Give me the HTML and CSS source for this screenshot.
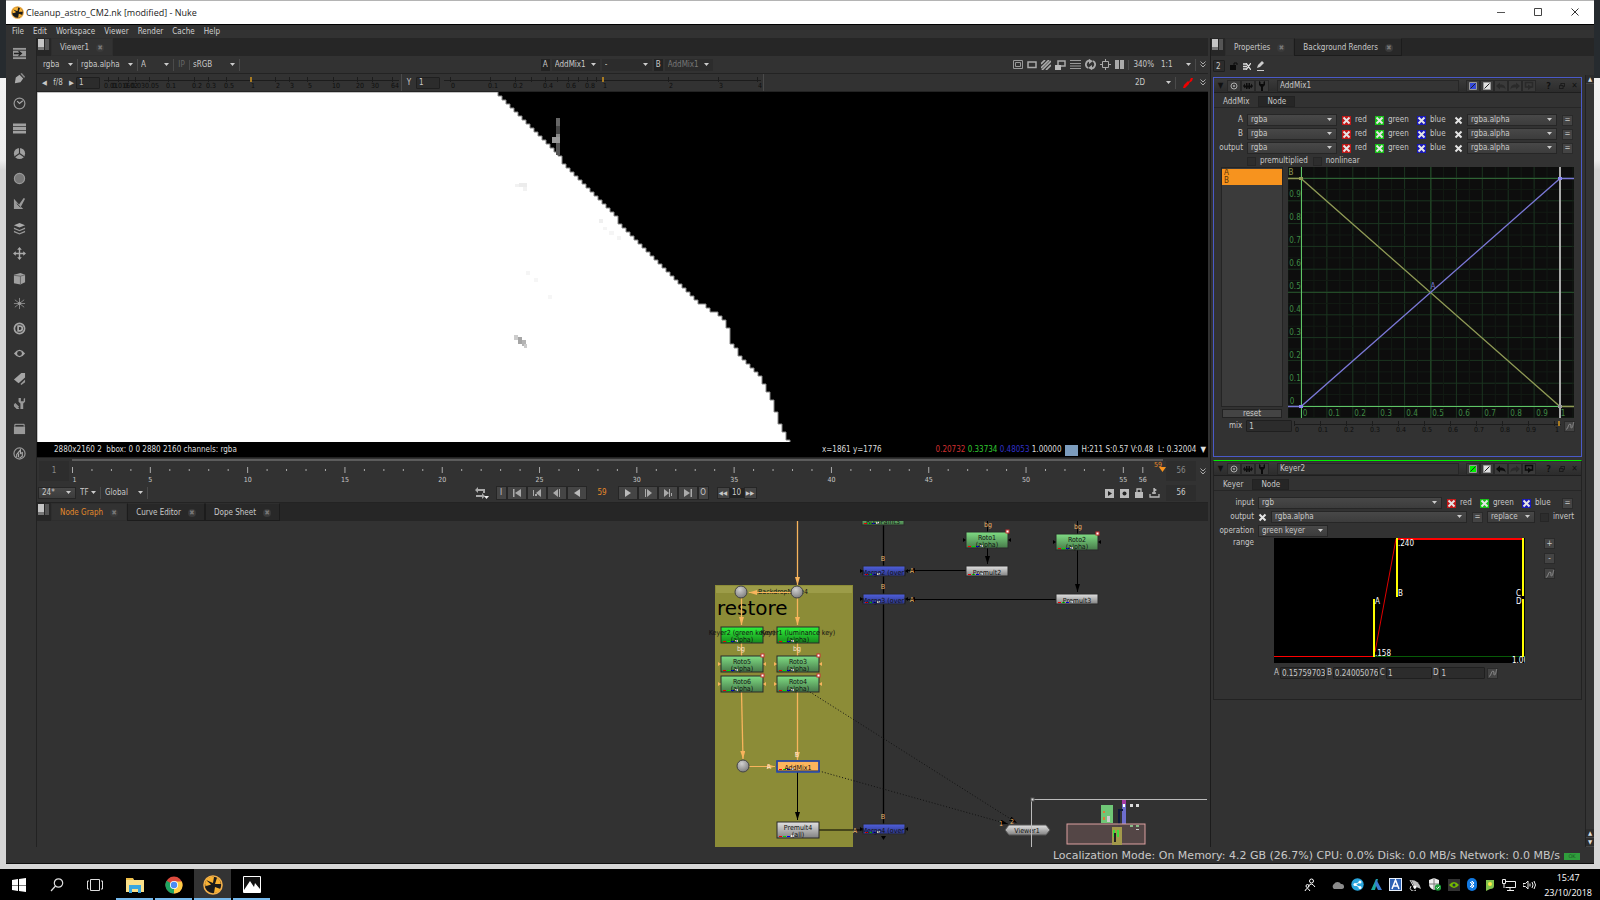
FILE: index.html
```html
<!DOCTYPE html>
<html lang="en">
<head>
    <meta charset="UTF-8">
    <meta name="viewport" content="width=device-width, initial-scale=1.0">
    <title>Cleanup_astro_CM2.nk [modified] - Nuke</title>
    <link rel="stylesheet" href="styles.css">
</head>
<body>
    <svg class="defs" width="0" height="0">
        <defs>
            <linearGradient id="gGreen" x2="0" y2="1"><stop offset="0" stop-color="#7fdd84"/><stop offset="1" stop-color="#477b4a"/></linearGradient>
            <linearGradient id="gKey" x2="0" y2="1"><stop offset="0" stop-color="#2df23a"/><stop offset="1" stop-color="#178a1d"/></linearGradient>
            <linearGradient id="gBlue" x2="0" y2="1"><stop offset="0" stop-color="#4f60de"/><stop offset="1" stop-color="#2c3687"/></linearGradient>
            <linearGradient id="gGrey" x2="0" y2="1"><stop offset="0" stop-color="#e2e2e2"/><stop offset="1" stop-color="#828282"/></linearGradient>
            <radialGradient id="gDot" cx=".4" cy=".3" r=".8"><stop offset="0" stop-color="#d0d0d0"/><stop offset="1" stop-color="#747474"/></radialGradient>
            <marker id="arrowO" markerUnits="userSpaceOnUse" viewBox="0 0 8 5" markerWidth="8" markerHeight="5" refX="8" refY="2.5" orient="auto"><path d="M0 0L8 2.5L0 5z" fill="#f8b45c"/></marker>
            <marker id="arrowK" markerUnits="userSpaceOnUse" viewBox="0 0 8 5" markerWidth="8" markerHeight="5" refX="8" refY="2.5" orient="auto"><path d="M0 0L8 2.5L0 5z" fill="#000"/></marker>
        </defs>
        <symbol id="nuke" viewBox="0 0 20 20"><circle cx="10" cy="10" r="9" fill="#1b1b1b" stroke="#f3b04b" stroke-width="1.6"/><path d="M10 8L3 5A8 8 0 0 1 11 2zM12 9L14 2.800A8 8 0 0 1 17.800 9zM12 12l5.500 2A8 8 0 0 1 11 18zM8 9.500L2.500 12A8 8 0 0 1 3 5z" fill="#f9b233"/><path d="M9 10L4 15a8 8 0 0 1-1.800-4z" fill="#1b1b1b"/><circle cx="10.500" cy="9.500" r="1.700" fill="#1b1b1b"/></symbol>
        <symbol id="pane" viewBox="0 0 11 11"><path d="M0 0h6v8H0z" fill="#c4c4c4"/><path d="M0 8h6v3H0z" fill="#777"/><path d="M7 0h4v11H7z" fill="#555"/></symbol>
        <symbol id="chev" viewBox="0 0 6 7"><path d="M.5 .5L3 3L5.500 .5M.5 3.500L3 6L5.500 3.500" fill="none" stroke="#aaa"/></symbol>
        <symbol id="curve" viewBox="0 0 10 10"><path d="M1 8C3 9 3 3 5 3S5 7 6.500 7S8 2 9 1" fill="none" stroke="#8d8d8d"/></symbol>
        <symbol id="target" viewBox="0 0 10 10"><circle cx="5" cy="5" r="3" fill="none" stroke="#aaa"/><circle cx="5" cy="5" r="1" fill="#aaa"/></symbol>
        <symbol id="wings" viewBox="0 0 10 10"><path d="M0 5l2-2.500v2h1V2h1.500v2.500h1V2H7v2.500h1v-2L10 5 8 7.500v-1H7V8H5.500V6.500h-1V8H3V6.500H2v1z" fill="#0c0c0c"/></symbol>
        <symbol id="wrench" viewBox="0 0 10 10"><path d="M2 0v4l2 2v4h2V6l2-2V0L6.500 1v2h-3V1z" fill="#0a0a0a"/></symbol>
        <symbol id="swatch" viewBox="0 0 8 8"><path d="M.5 .5h7v7h-7z" fill="currentColor" stroke="#999"/><path d="M1.500 6.500L6.500 1.500" stroke="#222"/></symbol>
        <symbol id="undo" viewBox="0 0 10 8"><path d="M0 4l4-3.500v2c4 0 5.500 1.500 5.500 5C8.500 5.500 7 5.500 4 5.500v2z" fill="currentColor"/></symbol>
        <symbol id="revert" viewBox="0 0 10 9"><path d="M4 6H1.500V1.500h7V6H7" fill="none" stroke="currentColor" stroke-width="1.500"/><path d="M4 3.500L8 6 4 9z" fill="currentColor"/></symbol>
        <symbol id="float" viewBox="0 0 8 8"><path d="M2.500 3V.5h5v4H6M.5 3.500h5v4h-5z" fill="none" stroke="#111"/></symbol>
    </svg>

    <div class="desktop">
        <div class="window">
            <header class="titlebar">
                <svg width="13" height="13"><use href="#nuke"/></svg>
                <h1>Cleanup_astro_CM2.nk [modified] - Nuke</h1>
                <div class="win-buttons">
                    <button aria-label="Minimize"><svg width="9" height="9"><path d="M0 4.500h8" stroke="#555"/></svg></button>
                    <button aria-label="Maximize"><svg width="9" height="9"><path d="M.5 .5h7v7h-7z" fill="none" stroke="#444"/></svg></button>
                    <button aria-label="Close"><svg width="9" height="9"><path d="M.5 .5l7 7M7.500 .5l-7 7" stroke="#333"/></svg></button>
                </div>
            </header>
            <nav class="menubar">
                <a href="#">File</a><a href="#">Edit</a><a href="#">Workspace</a><a href="#">Viewer</a><a href="#">Render</a><a href="#">Cache</a><a href="#">Help</a>
            </nav>

            <div class="workspace">
                <aside class="toolbar">
                    <button aria-label="Image"><svg viewBox="0 0 14 14"><path d="M0 1h14v12H0z" fill="#999"/><path d="M0 3.500h14M0 10.500h14" stroke="#333"/><path d="M1 7h7M6 4.500L9 7L6 9.500" fill="none" stroke="#222" stroke-width="1.500"/></svg></button>
                    <button aria-label="Draw"><svg viewBox="0 0 14 14"><path d="M2 12l1-6 4-3 4 4-3 4z" fill="#aaa"/><path d="M8 2l1.500-1 3.500 4-1 1.500z" fill="#888"/></svg></button>
                    <button aria-label="Time"><svg viewBox="0 0 14 14"><circle cx="7" cy="7" r="5.800" fill="none" stroke="#999" stroke-width="1.300"/><path d="M4.500 4.500L7 7L10.500 4" fill="none" stroke="#aaa" stroke-width="1.300"/></svg></button>
                    <button aria-label="Channel"><svg viewBox="0 0 14 14"><path d="M0 1.500h14v3H0zM0 5.500h14v3H0zM0 9.500h14v3H0z" fill="#a0a0a0"/></svg></button>
                    <button aria-label="Color"><svg viewBox="0 0 14 14"><circle cx="7" cy="7" r="6" fill="#a0a0a0"/><path d="M7 1v6L2 10.500M7 7l5 3.500" fill="none" stroke="#333" stroke-width="1.200"/></svg></button>
                    <button aria-label="Filter"><svg viewBox="0 0 14 14"><circle cx="7" cy="7" r="5.500" fill="#777" stroke="#999" stroke-width="1.200"/></svg></button>
                    <button aria-label="Keyer"><svg viewBox="0 0 14 14"><path d="M1 2v11h10L8.500 10.500L13 2L11.500 1L6.500 8z" fill="#9a9a9a"/><path d="M4 7l4 4" stroke="#333"/></svg></button>
                    <button aria-label="Merge"><svg viewBox="0 0 14 14"><path d="M7 1l6 2.500-6 2.500-6-2.500z" fill="#aaa"/><path d="M1 6l6 2.500L13 6v1.500L7 10L1 7.500zM1 9.500L7 12l6-2.500V11l-6 2.500L1 11z" fill="#999"/></svg></button>
                    <button aria-label="Transform"><svg viewBox="0 0 14 14"><path d="M7 2v10M2 7h10" stroke="#aaa" stroke-width="1.500"/><path d="M7 0l2.500 3h-5zM7 14l2.500-3h-5zM0 7l3-2.500v5zM14 7l-3-2.500v5z" fill="#aaa"/></svg></button>
                    <button aria-label="3D"><svg viewBox="0 0 14 14"><path d="M1 3l7-2 5 2v8l-5 2.500L1 12z" fill="#a0a0a0"/><path d="M1 3.500l7 1 5-1.500M8 4.500v9" fill="none" stroke="#555" stroke-width=".8"/></svg></button>
                    <button aria-label="Particles"><svg viewBox="0 0 14 14"><path d="M7 1v12M2 3l10 8M12 3L2 11M1 7h12" stroke="#888"/><circle cx="7" cy="7" r="1.800" fill="#999"/></svg></button>
                    <button aria-label="Deep"><svg viewBox="0 0 14 14"><circle cx="7" cy="7" r="5.500" fill="#333" stroke="#a5a5a5" stroke-width="1.800"/><path d="M5.500 4.500h2a2.500 2.500 0 0 1 0 5h-2z" fill="none" stroke="#aaa" stroke-width="1.800"/></svg></button>
                    <button aria-label="Views"><svg viewBox="0 0 14 14"><path d="M1 7q6-8 12 0q-6 8-12 0z" fill="#a5a5a5"/><circle cx="7" cy="7" r="2.600" fill="#333"/></svg></button>
                    <button aria-label="MetaData"><svg viewBox="0 0 14 14"><path d="M1 8l8-7h4v5l-7 6z" fill="#a5a5a5"/><path d="M8 13l5-5v3l-4 3z" fill="#999"/></svg></button>
                    <button aria-label="ToolSets"><svg viewBox="0 0 14 14"><path d="M6 1v4l2 2v6h3V7l2-2V1l-1.500 1v2.500h-3V1zM1 7v3l3 3h3l-4-4z" fill="#999"/><path d="M2 7l4 4" stroke="#999" stroke-width="1.500"/></svg></button>
                    <button aria-label="Other"><svg viewBox="0 0 14 14"><path d="M1 5h12v8H1z" fill="#999"/><path d="M2 5V2.500h10V5" fill="none" stroke="#aaa"/></svg></button>
                    <button aria-label="Furnace"><svg viewBox="0 0 14 14"><circle cx="7" cy="7" r="6" fill="none" stroke="#999" stroke-width="1.300"/><path d="M4 11V8l4-5v4l2-1v4l-3 2M6 7v4" fill="none" stroke="#aaa" stroke-width="1.200"/></svg></button>
                </aside>

                <main class="center">
                    <div class="tabs">
                        <svg class="pane" width="11" height="11"><use href="#pane"/></svg>
                        <div class="tab active">Viewer1 <button class="x" aria-label="Close tab">✖</button></div>
                    </div>
                    <div class="bar">
                        <select class="flat w38" aria-label="Channels"><option>rgba</option></select>
                        <select class="flat w60" aria-label="Alpha channel"><option>rgba.alpha</option></select>
                        <select class="flat w36" aria-label="Display channel"><option>A</option></select>
                        <button class="ip">IP</button>
                        <select class="flat w50" aria-label="Viewer process"><option>sRGB</option></select>
                        <div class="inputs">
                            <label for="inA">A</label><select id="inA" class="dark w48"><option>AddMix1</option></select>
                            <select class="dark w50" aria-label="Wipe"><option>-</option></select>
                            <label for="inB">B</label><select id="inB" class="dark w48 dim"><option>AddMix1</option></select>
                        </div>
                        <div class="view-icons">
                            <svg width="10" height="9"><path d="M.5 .5h9v8h-9zM2.500 2.500h5v4h-5z" fill="none" stroke="#999"/></svg>
                            <svg width="10" height="9"><path d="M1 2h8v5.500H1z" fill="none" stroke="#aaa" stroke-width="1.500"/></svg>
                            <svg width="10" height="10"><path d="M0 4l4-4M0 8l8-8M1 10l9-9M5 10l5-5" stroke="#aaa" stroke-width="1.700"/></svg>
                            <svg width="11" height="10"><path d="M3 1h7v5H3z" fill="none" stroke="#aaa" stroke-width="1.500"/><path d="M0 5h6v5H0z" fill="#bbb"/></svg>
                            <svg width="11" height="9"><path d="M0 .5h11M0 3.500h11M0 6h11M0 8.500h11" stroke="#999"/></svg>
                            <svg width="11" height="11"><path d="M5 1.500A4 4 0 0 0 3 9M6 9.500A4 4 0 0 0 8 2" fill="none" stroke="#aaa" stroke-width="1.800"/><path d="M4 0l4 2-4 3zM7 6L3 9l4 2z" fill="#aaa"/></svg>
                            <svg width="11" height="11"><path d="M2.500 2.500h6v6h-6zM5.500 0v3M5.500 8v3M0 5.500h3M8 5.500h3" fill="none" stroke="#aaa"/></svg>
                            <svg width="9" height="9"><path d="M0 0h4v9H0zM5 0h4v9H5z" fill="#aaa"/></svg>
                            <span class="zoom">340%</span>
                            <select class="flat w38" aria-label="Proxy scale"><option>1:1</option></select>
                            <svg width="6" height="7"><use href="#chev"/></svg>
                        </div>
                    </div>
                    <div class="bar exposure">
                        <button class="tri" aria-label="Previous f-stop">◀</button><span class="fstop">f/8</span><button class="tri" aria-label="Next f-stop">▶</button>
                        <input class="num gain" type="text" value="1" aria-label="Gain">
                        <svg id="gain" class="ruler" width="300" height="17"></svg>
                        <label class="gamma" for="gamma">Y</label>
                        <input class="num gain" id="gamma" type="text" value="1">
                        <svg id="gammaRuler" class="ruler" width="322" height="17"></svg>
                        <div class="view-icons">
                            <select class="flat w44" aria-label="View mode"><option>2D</option></select>
                            <svg width="10" height="10"><path d="M0 10l1-3 4-4 1 1 2-4 2 0-1 3-3 2 0 1-4 4z" fill="#f00000"/></svg>
                            <svg width="6" height="7"><use href="#chev"/></svg>
                        </div>
                    </div>
                    <svg id="viewer" class="viewer"></svg>
                    <div class="infobar">
                        <span>2880x2160 2&nbsp; bbox: 0 0 2880 2160 channels: rgba</span>
                        <span class="xy">x=1861 y=1776</span>
                        <span class="rgb"><i class="r">0.20732</i> <i class="g">0.33734</i> <i class="b">0.48053</i> <i>1.00000</i></span>
                        <span class="chip"></span>
                        <span>H:211 S:0.57 V:0.48&nbsp; L: 0.32004</span>
                        <span class="down">▼</span>
                    </div>
                    <div class="timeline">
                        <div class="frame-box">1</div>
                        <svg id="time" class="time"></svg>
                        <div class="frame-box">56</div>
                        <svg class="tl-chev" width="6" height="7"><use href="#chev"/></svg>
                    </div>
                    <div class="playbar">
                        <select class="box w38" aria-label="Frame rate"><option>24*</option></select>
                        <select class="flat w24" aria-label="Time format"><option>TF</option></select>
                        <select class="flat w46" aria-label="Range"><option>Global</option></select>
                        <div class="transport">
                            <svg width="14" height="12"><path d="M1 3h8v3M1 9h7" fill="none" stroke="#aaa" stroke-width="2"/><path d="M3 0v6L0 3zM7 6v6l3-3z" fill="#aaa"/><path d="M9 9h5l-2.500 3z" fill="#eee"/></svg>
                            <button class="io">I</button>
                            <button aria-label="First frame"><svg viewBox="0 0 10 8"><path d="M1 0h1.500v8H1zM9 0v8L3 4z" fill="#aaa"/></svg></button>
                            <button aria-label="Previous keyframe"><svg viewBox="0 0 10 8"><path d="M1 1h1v6H1zM3 5h2v2H3zM9 0v8L4 4z" fill="#aaa"/></svg></button>
                            <button aria-label="Step back"><svg viewBox="0 0 10 8"><path d="M6 0v8L1 4zM7 0h1v8H7z" fill="#aaa"/></svg></button>
                            <button aria-label="Play backward"><svg viewBox="0 0 10 8"><path d="M8 0v8L2 4z" fill="#bbb"/></svg></button>
                            <input class="cur" type="text" value="59" aria-label="Current frame">
                            <button aria-label="Play forward"><svg viewBox="0 0 10 8"><path d="M2 0v8l6-4z" fill="#bbb"/></svg></button>
                            <button aria-label="Step forward"><svg viewBox="0 0 10 8"><path d="M4 0v8l5-4zM2 0h1v8H2z" fill="#aaa"/></svg></button>
                            <button aria-label="Next keyframe"><svg viewBox="0 0 10 8"><path d="M1 0v8l5-4zM6 0h1v8H6zM8 4h1v3H8z" fill="#aaa"/></svg></button>
                            <button aria-label="Last frame"><svg viewBox="0 0 10 8"><path d="M1 0v8l6-4zM7.500 0H9v8H7.500z" fill="#aaa"/></svg></button>
                            <button class="io">O</button>
                            <button class="jump" aria-label="Back 10">◀◀</button>
                            <input class="inc" type="text" value="10" aria-label="Increment">
                            <button class="jump" aria-label="Forward 10">▶▶</button>
                        </div>
                        <div class="play-right">
                            <svg width="9" height="9"><path d="M0 0h9v9H0z" fill="#bbb"/><path d="M3 2v5l4-2.500z" fill="#222"/></svg>
                            <svg width="9" height="9"><path d="M0 0h9v9H0z" fill="#bbb"/><circle cx="4.500" cy="4.500" r="2" fill="#222"/></svg>
                            <svg width="8" height="10"><path d="M0 4h8v6H0z" fill="#bbb"/><path d="M2 4V1h4v3" fill="none" stroke="#bbb" stroke-width="1.300"/></svg>
                            <svg width="11" height="10"><path d="M1 6v3h9V6M5 0v6M3 5h4" fill="none" stroke="#bbb" stroke-width="1.300"/><path d="M5 0l3 2-3 2z" fill="#bbb"/></svg>
                            <div class="frame-box low">56</div>
                        </div>
                    </div>
                    <div class="tabs">
                        <svg class="pane" width="11" height="11"><use href="#pane"/></svg>
                        <div class="tab active orange">Node Graph <button class="x" aria-label="Close tab">✖</button></div>
                        <div class="tab">Curve Editor <button class="x" aria-label="Close tab">✖</button></div>
                        <div class="tab">Dope Sheet <button class="x" aria-label="Close tab">✖</button></div>
                    </div>
                    <svg id="graph" class="graph"></svg>
                </main>

                <section class="side">
                    <div class="tabs">
                        <svg class="pane" width="11" height="11"><use href="#pane"/></svg>
                        <div class="tab active">Properties <button class="x" aria-label="Close tab">✖</button></div>
                        <div class="tab">Background Renders <button class="x" aria-label="Close tab">✖</button></div>
                    </div>
                    <div class="prop-bar">
                        <input class="num w12" type="text" value="2" aria-label="Max panels">
                        <svg width="8" height="8"><path d="M0 3h6v5H0z" fill="#0a0a0a"/><path d="M4 3V1h3v2" fill="none" stroke="#0a0a0a"/></svg>
                        <svg width="8" height="7"><path d="M0 1h4M0 3.500h4M0 6h4M3 0l5 7M8 0L3 7" stroke="#ddd" stroke-width="1.300"/></svg>
                        <svg width="9" height="10"><path d="M1 7l1-3 4-4 2 2-4 4z" fill="#ccc"/><path d="M1 9.500h7" stroke="#ccc"/></svg>
                    </div>
                    <div class="side-body">
                        <div class="panels">
                            <article class="panel blue-line">
                                <div class="panel-head">
                                    <button class="bare" aria-label="Collapse">▼</button>
                                    <button aria-label="Center"><svg width="10" height="10"><use href="#target"/></svg></button>
                                    <button aria-label="Hide inputs"><svg width="10" height="10"><use href="#wings"/></svg></button>
                                    <button aria-label="Tools"><svg width="10" height="10"><use href="#wrench"/></svg></button>
                                    <input class="name" type="text" value="AddMix1" aria-label="Node name">
                                    <button class="c-blue" aria-label="Node colour"><svg width="8" height="8"><use href="#swatch"/></svg></button>
                                    <button class="c-white" aria-label="GL colour"><svg width="8" height="8"><use href="#swatch"/></svg></button>
                                    <button class="off" aria-label="Undo"><svg width="10" height="8"><use href="#undo"/></svg></button>
                                    <button class="off" aria-label="Redo"><svg class="flip" width="10" height="8"><use href="#undo"/></svg></button>
                                    <button class="off" aria-label="Revert"><svg width="10" height="9"><use href="#revert"/></svg></button>
                                    <button class="bare first" aria-label="Help">?</button>
                                    <button class="bare" aria-label="Float"><svg width="6" height="6"><use href="#float"/></svg></button>
                                    <button class="bare" aria-label="Close">✕</button>
                                </div>
                                <div class="subtabs"><button class="on">AddMix</button><button>Node</button></div>
                                <div class="rows short" id="channelRows"></div>
                                <div class="flags">
                                    <label><input type="checkbox">premultiplied</label>
                                    <label><input type="checkbox">nonlinear</label>
                                </div>
                                <div class="curves">
                                    <div class="curve-list">
                                        <ul><li>A</li><li>B</li></ul>
                                        <button>reset</button>
                                    </div>
                                    <svg id="curves" width="286" height="251"></svg>
                                </div>
                                <div class="mix">
                                    <label for="mix">mix</label>
                                    <input class="num w47" id="mix" type="text" value="1">
                                    <svg id="mixRuler" width="272" height="16"></svg>
                                    <button class="sq" aria-label="Animation"><svg width="10" height="10"><use href="#curve"/></svg></button>
                                </div>
                            </article>

                            <article class="panel green-line">
                                <div class="panel-head">
                                    <button class="bare" aria-label="Collapse">▼</button>
                                    <button aria-label="Center"><svg width="10" height="10"><use href="#target"/></svg></button>
                                    <button aria-label="Hide inputs"><svg width="10" height="10"><use href="#wings"/></svg></button>
                                    <button aria-label="Tools"><svg width="10" height="10"><use href="#wrench"/></svg></button>
                                    <input class="name" type="text" value="Keyer2" aria-label="Node name">
                                    <button class="c-green" aria-label="Node colour"><svg width="8" height="8"><use href="#swatch"/></svg></button>
                                    <button class="c-white" aria-label="GL colour"><svg width="8" height="8"><use href="#swatch"/></svg></button>
                                    <button aria-label="Undo"><svg width="10" height="8"><use href="#undo"/></svg></button>
                                    <button class="off" aria-label="Redo"><svg class="flip" width="10" height="8"><use href="#undo"/></svg></button>
                                    <button aria-label="Revert"><svg width="10" height="9"><use href="#revert"/></svg></button>
                                    <button class="bare first" aria-label="Help">?</button>
                                    <button class="bare" aria-label="Float"><svg width="6" height="6"><use href="#float"/></svg></button>
                                    <button class="bare" aria-label="Close">✕</button>
                                </div>
                                <div class="subtabs"><button class="on">Keyer</button><button>Node</button></div>
                                <div class="rows">
                                    <div class="row">
                                        <label class="lab" for="kin">input</label>
                                        <select id="kin" class="grow"><option>rgb</option></select>
                                        <label class="ch w33"><input type="checkbox" class="red" checked>red</label>
                                        <label class="ch w42"><input type="checkbox" class="green" checked>green</label>
                                        <label class="ch w36"><input type="checkbox" class="blue" checked>blue</label>
                                        <button class="sq">=</button>
                                    </div>
                                    <div class="row">
                                        <label class="lab" for="kout">output</label>
                                        <input type="checkbox" class="plain" checked aria-label="Output enabled">
                                        <select id="kout" class="grow"><option>rgba.alpha</option></select>
                                        <button class="sq">=</button>
                                        <select class="w48" aria-label="Mode"><option>replace</option></select>
                                        <label class="ch w38"><input type="checkbox">invert</label>
                                    </div>
                                    <div class="row">
                                        <label class="lab" for="kop">operation</label>
                                        <select id="kop" class="w70"><option>green keyer</option></select>
                                    </div>
                                </div>
                                <div class="range">
                                    <span class="lab">range</span>
                                    <svg id="range" width="251" height="125"></svg>
                                    <div class="range-buttons">
                                        <button class="sq">+</button>
                                        <button class="sq">-</button>
                                        <button class="sq" aria-label="Animation"><svg width="10" height="10"><use href="#curve"/></svg></button>
                                    </div>
                                </div>
                                <div class="abcd">
                                    <label for="va">A</label><input class="num" id="va" type="text" value="0.15759703">
                                    <label for="vb">B</label><input class="num" id="vb" type="text" value="0.24005076">
                                    <label for="vc">C</label><input class="num" id="vc" type="text" value="1">
                                    <label for="vd">D</label><input class="num" id="vd" type="text" value="1">
                                    <button class="sq" aria-label="Animation"><svg width="10" height="10"><use href="#curve"/></svg></button>
                                </div>
                            </article>
                        </div>
                        <div class="scroll"><button aria-label="Scroll up">▲</button><span class="thumb"></span><button aria-label="Scroll up">▲</button><button aria-label="Scroll down">▼</button></div>
                    </div>
                </section>
            </div>
            <footer class="status">Localization Mode: On Memory: 4.2 GB (26.7%) CPU: 0.0% Disk: 0.0 MB/s Network: 0.0 MB/s <span class="ok">OK</span></footer>
        </div>
    </div>

    <div class="taskbar">
        <button aria-label="Start"><svg width="14" height="14"><path d="M0 2l6-1v6H0zM7 1l7-1v7H7zM0 7.500h6V13l-6-1zM7 7.500h7V14l-7-1z" fill="#fff"/></svg></button>
        <button aria-label="Search"><svg width="14" height="14"><circle cx="8.500" cy="5" r="4.200" fill="none" stroke="#ddd" stroke-width="1.200"/><path d="M5.500 8L1 13" stroke="#ddd" stroke-width="1.200"/></svg></button>
        <button aria-label="Task view"><svg width="16" height="14"><path d="M3.500 1.500h9v11h-9zM2 3H.5v8H2M14 3h1.500v8H14" fill="none" stroke="#ddd"/></svg></button>
        <button class="run" aria-label="File Explorer"><svg width="18" height="16"><path d="M0 1h7l1 2h10v12H0z" fill="#fbe08a"/><path d="M0 1h7v2H0z" fill="#f0c04a"/><path d="M3 8h12v8h-3v-4H6v4H3z" fill="#39a6e0"/></svg></button>
        <button class="run" aria-label="Chrome"><svg width="18" height="18" viewBox="0 0 18 18"><circle cx="9" cy="9" r="8.500" fill="#dd4b3e"/><path d="M9 9L1.600 4.700A8.500 8.500 0 0 0 9 17.500z" fill="#1da462"/><path d="M9 9v8.500A8.500 8.500 0 0 0 16.800 5.500H9z" fill="#ffcd46"/><circle cx="9" cy="9" r="4" fill="#fff"/><circle cx="9" cy="9" r="3.200" fill="#4c8bf5"/></svg></button>
        <button class="run current" aria-label="Nuke"><svg width="20" height="20"><use href="#nuke"/></svg></button>
        <button class="run" aria-label="Photos"><svg width="18" height="17"><path d="M.5 .5h17v16H.5z" fill="#111" stroke="#fff"/><path d="M1 14l6-9 4 6 1-4 5 6v4H1z" fill="#fff"/></svg></button>
        <div class="tray">
            <svg width="12" height="14"><circle cx="7.500" cy="3" r="2" fill="none" stroke="#fff"/><path d="M4 9q3-6 7 0M1 13q2-5 5 0" fill="none" stroke="#fff"/><circle cx="3.500" cy="8" r="1.500" fill="none" stroke="#fff"/></svg>
            <svg class="gap" width="13" height="9"><path d="M3 9a3 3 0 0 1 0-5a4 4 0 0 1 7 0a2.500 2.500 0 0 1 1 5z" fill="#8b8b8b"/></svg>
            <svg width="13" height="13"><circle cx="6.500" cy="6.500" r="6.200" fill="#29a5dc"/><path d="M9 4L4 6.500L9 9.500" fill="none" stroke="#fff"/><circle cx="9" cy="4" r="1.500" fill="#fff"/><circle cx="4" cy="6.500" r="1.500" fill="#fff"/><circle cx="9" cy="9.500" r="1.500" fill="#fff"/></svg>
            <svg width="11" height="11"><path d="M0 11L5 0h2L4 11z" fill="#1ca7a0"/><path d="M5 0l6 11H7L4 5z" fill="#3a7bd0"/></svg>
            <svg width="13" height="13"><path d="M0 0h13v13H0z" fill="#e7effa"/><path d="M1 1h11v11H1z" fill="#2c62b4"/><path d="M3 11L6.500 2L10 11M4.500 8h4" fill="none" stroke="#fff" stroke-width="1.500"/></svg>
            <svg width="13" height="12"><path d="M2 1q8 0 10 9L5 7z" fill="#bbb"/><path d="M1 1l5 9M2 7a3 3 0 0 0 5 4" fill="none" stroke="#ddd"/><circle cx="6" cy="8" r="1.500" fill="#fff"/></svg>
            <svg width="12" height="13"><path d="M5 0l5 2v4q0 4-5 6Q0 10 0 6V2z" fill="#eee"/><path d="M5 0v12M0 6h10" stroke="#777"/><circle cx="9" cy="9.500" r="3.200" fill="#1f9d3b"/><path d="M7.500 9.500l1 1 2-2" fill="none" stroke="#fff"/></svg>
            <svg width="12" height="12"><path d="M0 0h12v12H0z" fill="#333"/><path d="M1 6q5-6 10 0q-5 6-10 0z" fill="#76b900"/><circle cx="6" cy="6" r="1.500" fill="#234"/></svg>
            <svg width="10" height="13"><rect width="10" height="13" rx="5" fill="#1279e2"/><path d="M3 4l4 4-2 2V3l2 2-4 4" fill="none" stroke="#fff"/></svg>
            <svg width="11" height="12"><path d="M2 1h8v6q0 3-4 3l-4 2z" fill="#82c34c"/><circle cx="6" cy="5" r="2" fill="#ffe94a"/></svg>
            <svg width="14" height="12"><path d="M3.500 2.500h10v6h-10M8 9v2.500M5 11.500h7M.5 .5h3v4h-3zM2 5v4" fill="none" stroke="#eee"/></svg>
            <svg width="14" height="10"><path d="M0 3.500h2.500L5 1v8L2.500 6.500H0z" fill="none" stroke="#eee"/><path d="M7 3.500v3M9 2q2 3 0 6M11 1q3 4 0 8" fill="none" stroke="#eee"/></svg>
            <div class="clock">15:47<br>23/10/2018</div>
        </div>
    </div>
    <script src="script.js"></script>
</body>
</html>
```
FILE: styles.css
```css
* {
    box-sizing: border-box;
}
body {
    margin: 0;
    height: 100vh;
    display: flex;
    flex-direction: column;
    overflow: hidden;
    font-family: "DejaVu Sans Condensed", "DejaVu Sans", sans-serif;
    font-size: 8px;
    line-height: 10px;
    color: #c8c8c8;
    background: #000;
}
.defs {
    position: absolute;
}
button, input, select {
    font: inherit;
    color: inherit;
    margin: 0;
    padding: 0;
    border: 0;
    border-radius: 0;
    background: none;
    min-width: 0;
}
button {
    display: flex;
    align-items: center;
    justify-content: center;
}
a {
    color: inherit;
    text-decoration: none;
}
svg {
    display: block;
    flex: none;
}
i {
    font-style: normal;
}

/* desktop and window */
.desktop {
    flex: 1;
    min-height: 0;
    padding: 0 6px 5px;
    display: flex;
    background: linear-gradient(#262b2f 78px, #f2f2f2 78px, #ededed 160px, #d6d6d6 170px);
}
.window {
    flex: 1;
    min-width: 0;
    display: flex;
    flex-direction: column;
    background: #323232;
    border-top: 1px solid #b4b4b4;
    border-bottom: 1px solid #111;
}
.titlebar {
    height: 23px;
    display: flex;
    align-items: center;
    gap: 2px;
    padding-left: 5px;
    background: #fff;
}
.titlebar h1 {
    flex: 1;
    margin: 0;
    font: 9px/14px "Open Sans", sans-serif;
    color: #222;
}
.win-buttons {
    display: flex;
}
.win-buttons button {
    width: 37px;
    height: 23px;
}
.menubar {
    height: 14px;
    border-top: 1px solid #000;
    display: flex;
    align-items: center;
    gap: 9px;
    padding-left: 6px;
    color: #d0d0d0;
}
.workspace {
    flex: 1;
    min-height: 0;
    display: flex;
}
.toolbar {
    width: 31px;
    border-right: 1px solid #222;
    display: flex;
    flex-direction: column;
    align-items: center;
    padding-top: 3px;
    padding-right: 3px;
}
.toolbar button {
    height: 25px;
}
.toolbar svg {
    width: 13px;
    height: 13px;
}
.center {
    flex: 1;
    min-width: 0;
    display: flex;
    flex-direction: column;
}

/* tabs */
.tabs {
    height: 18px;
    flex: none;
    display: flex;
    background: #262626;
}
.pane {
    margin: 1px 2px 0 1px;
}
.tab {
    display: flex;
    align-items: center;
    gap: 7px;
    padding: 1px 8px 0;
    border: 1px solid #1c1c1c;
    border-top-color: #2e2e2e;
    background: #282828;
}
.tab.active {
    background: #323232;
    border-color: #2e2e2e;
}
.tab.orange {
    color: #e2892b;
}
.x {
    font-size: 7px;
    width: 8px;
    height: 8px;
    border-radius: 4px;
    background: #3a3a3a;
    color: #777;
}

/* selects */
select {
    appearance: none;
    height: 12px;
    padding: 0 10px 0 3px;
    border: 1px solid #262626;
    background: url("data:image/svg+xml,%3Csvg xmlns='http://www.w3.org/2000/svg' width='5' height='4'%3E%3Cpath d='M0 0h5L2.500 3z' fill='%23ccc'/%3E%3C/svg%3E") no-repeat right 4px center, linear-gradient(#484848, #3c3c3c);
}
select.flat {
    background: url("data:image/svg+xml,%3Csvg xmlns='http://www.w3.org/2000/svg' width='5' height='4'%3E%3Cpath d='M0 0h5L2.500 3z' fill='%23ccc'/%3E%3C/svg%3E") no-repeat right 4px center;
    border: 0;
    border-right: 1px solid #4a4a4a;
    flex: none;
}
select.dark {
    border: 0;
    background-image: url("data:image/svg+xml,%3Csvg xmlns='http://www.w3.org/2000/svg' width='5' height='4'%3E%3Cpath d='M0 0h5L2.500 3z' fill='%23ccc'/%3E%3C/svg%3E");
    background-color: #2c2c2c;
}
select.dim {
    color: #777;
}
.w12 { width: 12px; }
.w24 { width: 24px; }
.w33 { width: 33px; }
.w36 { width: 36px; }
.w38 { width: 38px; }
.w42 { width: 42px; }
.w44 { width: 44px; }
.w46 { width: 46px; }
.w47 { width: 47px; }
.w48 { width: 48px; }
.w50 { width: 50px; }
.w60 { width: 60px; }
.w70 { width: 70px; }

/* viewer bars */
.bar {
    height: 18px;
    flex: none;
    display: flex;
    align-items: center;
    padding: 0 2px 0 3px;
    border-bottom: 1px solid #232323;
}
.ip {
    width: 16px;
    color: #666;
    border-right: 1px solid #4a4a4a;
}
.inputs {
    display: flex;
    align-items: center;
    gap: 2px;
    margin: 0 auto;
}
.inputs label {
    background: #222;
    width: 9px;
    height: 12px;
    line-height: 12px;
    text-align: center;
}
.view-icons {
    display: flex;
    align-items: center;
    gap: 4px;
}
.exposure .view-icons {
    margin-left: auto;
    gap: 7px;
}
.zoom {
    border-left: 1px solid #4a4a4a;
    padding-left: 4px;
}
.tri {
    width: 9px;
    font-size: 7px;
}
.fstop {
    width: 18px;
    text-align: center;
}
.num {
    height: 12px;
    padding: 0 2px;
    background: #2c2c2c;
    border: 1px solid #1f1f1f;
    border-radius: 1px;
}
.gain {
    width: 24px;
    margin-right: 2px;
}
.ruler {
    border-right: 1px solid #4a4a4a;
}
.gamma {
    width: 14px;
    text-align: center;
}
.viewer {
    width: 100%;
    flex: 350 1 0;
    min-height: 0;
    background: #000;
}
.infobar {
    height: 15px;
    flex: none;
    display: flex;
    align-items: center;
    padding: 1px 2px 0 17px;
    background: #000;
    color: #ddd;
}
.infobar .xy {
    margin-left: auto;
}
.infobar .rgb {
    margin-left: 54px;
}
.r { color: #d03030; }
.g { color: #30c830; }
.b { color: #3030c8; }
.chip {
    width: 13px;
    height: 11px;
    margin: 0 4px 0 3px;
    background: #7c9cbd;
}
.down {
    margin-left: 4px;
}

/* timeline */
.timeline {
    height: 27px;
    flex: none;
    display: flex;
    align-items: center;
    padding: 0 2px;
    border-top: 1px solid #222;
}
.frame-box {
    width: 30px;
    height: 20px;
    line-height: 20px;
    text-align: center;
    background: #2d2d2d;
    color: #888;
}
.frame-box.low {
    height: 16px;
    line-height: 16px;
    color: #ccc;
}
.time {
    flex: 1;
    min-width: 0;
    height: 26px;
}
.tl-chev {
    margin-left: 4px;
}
.playbar {
    height: 19px;
    flex: none;
    display: flex;
    align-items: center;
    padding-left: 1px;
    gap: 1px;
    border-bottom: 1px solid #232323;
}
.transport {
    display: flex;
    align-items: center;
    margin: 0 auto;
    padding-right: 22px;
}
.transport button {
    width: 20px;
    height: 14px;
    background: #454545;
    border: 1px solid #262626;
}
.transport svg {
    margin-right: 7px;
}
.transport button svg {
    width: 10px;
    height: 8px;
    margin: 0;
}
.transport .io {
    width: 11px;
}
.transport .jump {
    width: 13px;
    height: 12px;
    font-size: 6px;
}
.transport .io + .jump {
    margin-left: 8px;
}
.cur, .inc {
    width: 31px;
    text-align: center;
    color: #e88a2a;
}
.inc {
    width: 14px;
    color: #ccc;
    background: #222;
}
.play-right {
    display: flex;
    align-items: center;
    gap: 6px;
    padding-right: 12px;
}
.graph {
    width: 100%;
    flex: 326 1 0;
    min-height: 0;
}

/* node graph and ruler text */
svg text {
    font-size: 7px;
    fill: #c8c8c8;
    text-anchor: middle;
}
.ruler text, #mixRuler text {
    fill: #0e0e0e;
}
.graph text {
    fill: #111;
}
.graph .pipe {
    fill: #e9b267;
}
.graph .pale {
    fill: #f4e6d0;
}
.graph .note {
    font-family: "DejaVu Sans", sans-serif;
    font-size: 20px;
    text-anchor: start;
    fill: #000;
}
#curves text {
    font-size: 8px;
    fill: #3f8a44;
}
#range text {
    font-size: 8px;
    fill: #fff;
    text-anchor: start;
}

/* properties */
.side {
    width: 384px;
    flex: none;
    margin-left: 2px;
    border-left: 1px solid #1c1c1c;
    display: flex;
    flex-direction: column;
}
.prop-bar {
    height: 19px;
    display: flex;
    align-items: center;
    gap: 5px;
    padding: 1px 0 0 2px;
}
.side-body {
    flex: 1;
    min-height: 0;
    display: flex;
    gap: 3px;
    padding-left: 2px;
}
.panels {
    flex: 1;
    min-width: 0;
    padding-top: 2px;
}
.panel {
    border: 1px solid #222;
    margin-bottom: 3px;
}
.blue-line {
    border-color: #4a5ac8;
    padding-bottom: 22px;
}
.green-line {
    border-top: 1px solid #00f000;
    padding-bottom: 20px;
}
.panel-head {
    height: 14px;
    margin-top: 1px;
    display: flex;
    align-items: center;
    background: linear-gradient(#3a3a3a, #2c2c2c);
    border-bottom: 1px solid #1e1e1e;
}
.panel-head button {
    width: 14px;
    height: 12px;
    background: #3a3a3a;
    border: 1px solid #282828;
    color: #0a0a0a;
}
.panel-head .bare {
    width: 13px;
    background: none;
    border: 0;
    color: #111;
}
.panel-head .bare.first {
    margin-left: 6px;
    font-weight: bold;
    font-size: 9px;
}
.panel-head .off {
    color: #2a2a2a;
}
.panel-head .c-blue { color: #3448d8; }
.panel-head .c-white { color: #e0e0e0; }
.panel-head .c-green { color: #00f000; }
.flip {
    transform: scaleX(-1);
}
.name {
    flex: 1;
    height: 12px;
    margin: 0 7px 0 8px;
    padding-left: 2px;
    border: 1px solid #262626;
    background: #343434;
}
.subtabs {
    display: flex;
    margin-top: 3px;
    height: 12px;
    border-bottom: 1px solid #262626;
}
.subtabs button {
    padding: 0 8px;
    background: #262626;
    border: 1px solid #222;
}
.subtabs .on {
    background: #323232;
    border-color: #323232;
}
.rows {
    --lab: 40px;
    padding: 6px 8px 0 0;
    display: flex;
    flex-direction: column;
    gap: 2px;
}
.rows.short {
    --lab: 29px;
}
.row {
    height: 12px;
    display: flex;
    align-items: center;
    gap: 4px;
}
.lab {
    width: var(--lab, 40px);
    flex: none;
    text-align: right;
}
.grow {
    flex: 1;
}
.ch {
    display: flex;
    align-items: center;
    gap: 4px;
    flex: none;
    margin-left: 1px;
    margin-right: -5px;
}
.ch + .sq {
    margin-left: 5px;
}
input[type="checkbox"] {
    appearance: none;
    width: 9px;
    height: 9px;
    flex: none;
    background: #2d2d2d;
    border: 1px solid #262626;
}
input[type="checkbox"]:checked {
    border: 0;
    background: url("data:image/svg+xml,%3Csvg xmlns='http://www.w3.org/2000/svg' width='9' height='9'%3E%3Cpath d='M1.500 1.500l6 6M7.500 1.500l-6 6' stroke='%23e4e4e4' stroke-width='2'/%3E%3C/svg%3E");
}
input.red:checked { background-color: #c01818; }
input.green:checked { background-color: #18c018; }
input.blue:checked { background-color: #1818b8; }
.sq {
    width: 11px;
    height: 11px;
    flex: none;
    background: #444;
    border: 1px solid #2a2a2a;
    margin-left: 1px;
}
.flags {
    display: flex;
    gap: 5px;
    height: 12px;
    align-items: center;
    margin: 1px 0 0 33px;
}
.flags label {
    display: flex;
    align-items: center;
    gap: 4px;
}
.curves {
    display: flex;
    justify-content: space-between;
    padding: 0 7px;
}
.curve-list {
    width: 62px;
    display: flex;
    flex-direction: column;
}
.curve-list ul {
    flex: 1;
    margin: 0 0 2px;
    padding: 1px 0 0;
    list-style: none;
    background: #3b3b3b;
    border: 1px solid #242424;
}
.curve-list li {
    height: 8px;
    line-height: 8px;
    padding-left: 2px;
    background: #f7931e;
    color: #5c3408;
}
.curve-list button {
    height: 9px;
    margin: 0 1px;
    background: #444;
    border: 1px solid #222;
}
#curves {
    background: #0d0d0d;
}
.mix {
    display: flex;
    align-items: center;
    padding: 0 6px 0 0;
    height: 16px;
}
.mix label {
    width: 29px;
    text-align: right;
    margin-right: 4px;
}
.mix .sq {
    margin-left: auto;
}
.range {
    display: flex;
    padding-top: 1px;
}
#range {
    background: #000;
    margin-left: 20px;
}
.range-buttons {
    display: flex;
    flex-direction: column;
    gap: 4px;
    margin-left: 18px;
}
.abcd {
    display: flex;
    align-items: center;
    gap: 1px;
    margin: 4px 0 0 60px;
}
.abcd .num {
    width: 46px;
    padding: 0 0 0 1px;
}
.scroll {
    width: 9px;
    display: flex;
    flex-direction: column;
    background: #2c2c2c;
    border-left: 1px solid #222;
}
.scroll button {
    height: 9px;
    font-size: 6px;
    color: #ddd;
    border-bottom: 1px solid #444;
}
.thumb {
    flex: 1;
    background: #343434;
}

/* status and taskbar */
.status {
    height: 16px;
    flex: none;
    display: flex;
    justify-content: flex-end;
    align-items: center;
    gap: 4px;
    padding: 2px 14px 0 0;
    font: 11px/14px "DejaVu Sans", sans-serif;
}
.ok {
    width: 16px;
    height: 7px;
    background: #2f9e3c;
    color: #1d5a25;
    font-size: 5px;
    line-height: 7px;
    text-align: center;
}
.taskbar {
    height: 31px;
    flex: none;
    display: flex;
    background: #000;
}
.taskbar button {
    width: 38px;
    height: 31px;
}
.taskbar .run {
    width: 37px;
    margin-left: 2px;
    border-top: 2px solid transparent;
    border-bottom: 2px solid #76b9ed;
}
.taskbar .current {
    background: #333;
}
.tray {
    margin-left: auto;
    display: flex;
    align-items: center;
    gap: 7px;
    padding-right: 8px;
}
.tray .gap {
    margin-left: 8px;
}
.clock {
    font: 9px/15px "Open Sans", sans-serif;
    color: #fff;
    text-align: center;
}
```
FILE: script.js
```js
const $ = id => document.getElementById(id);
const line = (x1, y1, x2, y2, color, extra = '') =>
    `<line x1="${x1}" y1="${y1}" x2="${x2}" y2="${y2}" stroke="${color}" ${extra}/>`;
const text = (x, y, s, cls = '') => `<text x="${x}" y="${y}" class="${cls}">${s}</text>`;
const rect = (x, y, w, h, fill, extra = '') =>
    `<rect x="${x}" y="${y}" width="${w}" height="${h}" fill="${fill}" ${extra}/>`;

// channel rows of the AddMix panel
$('channelRows').innerHTML = ['A', 'B', 'output'].map(n => `
    <div class="row">
        <label class="lab" for="ch${n}">${n}</label>
        <select id="ch${n}" class="grow"><option>rgba</option></select>
        <label class="ch w33"><input type="checkbox" class="red" checked>red</label>
        <label class="ch w42"><input type="checkbox" class="green" checked>green</label>
        <label class="ch w38"><input type="checkbox" class="blue" checked>blue</label>
        <input type="checkbox" class="plain" checked aria-label="Alpha">
        <select class="grow" aria-label="Alpha channel"><option>rgba.alpha</option></select>
        <button class="sq">=</button>
    </div>`).join('');

// slider rulers
function ruler(id, width, marks, pos) {
    let s = line(2, 6.5, width - 3, 6.5, '#1c1c1c');
    marks.forEach(([x, label]) => {
        s += line(x + .5, 3, x + .5, 8, '#1c1c1c') + text(x + 3, 14, label);
    });
    $(id).innerHTML = s + rect(pos, 3, 2, 5, '#a87b22');
}
ruler('gain', 300, [[6, '0.01'], [16, '0.016'], [26, '0.02'], [33, '0.03'], [47, '0.05'], [66, '0.1'], [92, '0.2'], [106, '0.3'], [124, '0.5'], [148, '1'], [173, '2'], [187, '3'], [205, '5'], [231, '10'], [255, '20'], [270, '30'], [290, '64']], 148);
ruler('gammaRuler', 322, [[8, '0'], [48, '0.1'], [73, '0.2'], [89, ''], [103, '0.4'], [115, ''], [126, '0.6'], [136, ''], [145, '0.8'], [154, ''], [160, '1'], [226, '2'], [276, '3'], [315, '4']], 160);
ruler('mixRuler', 272, ['0', '0.1', '0.2', '0.3', '0.4', '0.5', '0.6', '0.7', '0.8', '0.9', '1'].map((t, i) => [2 + i * 26, t]), 266);

// timeline
let t = rect(3, 1, 1091, 2, '#5c5c5c');
for (let f = 1; f <= 56; f++) {
    const x = 3.5 + (f - 1) * 19.46;
    const big = f === 1 || f === 56 || f % 5 === 0;
    t += line(x, big ? 9 : 11, x, big ? 15 : 13, '#aaa');
    if (big) t += text(f === 1 ? x + 2 : x, 24, f);
}
t += '<path d="M1090 9h7l-3.500 5z" fill="#f7931e"/><text x="1089" y="9" style="fill:#e88a2a">59</text>';
$('time').innerHTML = t;

// viewer: white matte with a stepped edge
const edge = [[458, 0], [523, 65], [594, 141], [656, 204], [688, 227], [694, 251], [723, 285], [735, 310], [745, 336], [753, 350]];
let d = 'M0 0H458';
for (let y = 0; y < 350; y += 4) {
    const k = edge.findIndex(p => p[1] > y);
    const [x0, y0] = edge[k - 1], [x1, y1] = edge[k];
    d += `H${Math.round((x0 + (x1 - x0) * (y - y0) / (y1 - y0)) / 4) * 4 + 1}v4`;
}
let v = `<path d="${d}V360H0z" fill="#fff" stroke="#888" stroke-width="1"/>`;
[[519, 26, 4, 10, '#666'], [519, 34, 4, 8, '#444'], [519, 42, 4, 6, '#888'], [515, 45, 8, 6, '#999'], [519, 51, 4, 12, '#555'],
 [478, 92, 4, 3, '#f2f2f2'], [482, 91, 8, 4, '#ececec'], [486, 95, 4, 4, '#f2f2f2'],
 [562, 127, 4, 4, '#efefef'], [566, 135, 4, 3, '#f5f5f5'], [572, 139, 5, 4, '#f5f5f5'], [580, 144, 4, 4, '#f4f4f4'],
 [489, 179, 4, 4, '#f5f5f5'], [497, 186, 4, 4, '#f6f6f6'], [511, 203, 4, 4, '#f6f6f6'],
 [477, 243, 4, 5, '#ccc'], [481, 245, 4, 7, '#a5a5a5'], [485, 248, 4, 6, '#b4b4b4'], [487, 252, 3, 4, '#ccc']
].forEach(p => v += rect(...p));
$('viewer').innerHTML = v;

// AddMix curves
let c = '';
for (let i = -1; i <= 22; i++) {
    const x = 13 + i * 12.95, y = 239 - i * 11.4;
    const col = i % 2 ? '#131b14' : '#1b3520';
    c += line(x, 0, x, 251, col) + line(0, y, 286, y, col);
}
c += line(143, 0, 143, 251, '#234a27') + line(0, 11.5, 286, 11.5, '#2f6234') + line(0, 125.5, 286, 125.5, '#234a27');
for (let i = 0; i <= 10; i++) {
    const n = i / 10;
    c += text(i === 10 ? 275 : i ? 20 + i * 26 : 17, 249, n);
    if (i < 10) c += text(i ? 7 : 4, 237 - i * 23, n);
}
c += line(13.5, 0, 13.5, 251, '#5fc466') + line(0, 239.5, 286, 239.5, '#5fc466');
c += '<path d="M0 11.500H13L272 239.500H286" fill="none" stroke="#8f9a55" stroke-width="1.300"/>';
c += '<path d="M0 239.500H13L272 11.500H286" fill="none" stroke="#7a78d6" stroke-width="1.300"/>';
c += rect(271, 0, 2, 251, '#aaa') + rect(11, 10, 4, 3, '#8f9a55') + rect(11, 238, 4, 3, '#8a88f0');
c += rect(270, 10, 4, 3, '#8a88f0') + rect(270, 238, 4, 3, '#999');
c += '<text x="3" y="8" style="fill:#8f9a55">B</text><text x="145" y="122" style="fill:#7a78d6">A</text>';
$('curves').innerHTML = c;

// keyer range
$('range').innerHTML = line(0, 118.5, 251, 118.5, '#075a07') + rect(0, 118, 100, 1, '#f00')
    + line(101, 114, 122, 1, '#e00000') + rect(124, 0, 125, 2, '#f00')
    + rect(99, 61, 2, 58, '#ff0') + rect(122, 0, 2, 59, '#ff0') + rect(248, 0, 2, 58, '#ff0') + rect(248, 61, 2, 58, '#ff0')
    + text(124, 8, '.240') + text(124, 58, 'B') + text(101, 66, 'A') + text(101, 118, '.158')
    + text(242, 58, 'C') + text(242, 66, 'D') + text(238, 125, '1.00');

// node graph
const O = '#f8b45c', K = '#000';
const ends = c => `marker-end="url(#${c})"`;
const thick = 'stroke-width="1.300"';
function node(x, y, h, fill, l1, l2) {
    let s = rect(x, y, 42, h, fill, 'stroke="#2a2a2a"');
    s += rect(x + 2, y + h - 2, 3, 1, '#e00') + rect(x + 6, y + h - 2, 3, 1, '#0d0')
        + rect(x + 10, y + h - 2, 3, 1, '#00e') + rect(x + 14, y + h - 3, 3, 2, '#eee');
    s += text(x + 21, y + (l2 ? 8 : 9), l1);
    return l2 ? s + text(x + 21, y + 15, l2) : s;
}
const pin = (x, y) => rect(x, y, 3, 3, '#fff', 'stroke="#c33"');
const side = (x, y, c) => `<path d="M${x - 3} ${y - 2}v4l3-2zM${x + 45} ${y - 2}v4l-3-2z" fill="${c}"/>`;
const dot = (x, y) => `<circle cx="${x}" cy="${y}" r="6" fill="url(#gDot)" stroke="#444"/>`;

let g = rect(678, 64, 138, 262, '#8c8c37') + rect(679, 65, 136, 7, '#9c9c48');
g += text(746, 73, 'BackdropNode4') + text(680, 94, 'restore', 'note');
g += line(760.5, 0, 760.5, 64, O, thick + ends('arrowO')) + line(754, 71.5, 712, 71.5, O, ends('arrowO'));
g += line(704.5, 77, 704.5, 104, O, thick + ends('arrowO')) + line(760.5, 77, 760.5, 104, O, thick + ends('arrowO'));
g += line(704.5, 122, 704.5, 135, O, thick) + line(760.5, 122, 760.5, 135, O, thick);
g += line(704.5, 171, 706, 238, O, thick + ends('arrowO')) + line(760.5, 171, 760.5, 239, O, thick + ends('arrowO'));
g += line(712, 245.5, 738, 245.5, O, ends('arrowO')) + line(760.5, 251, 760.5, 299, K, ends('arrowK'));
g += line(782, 309, 826, 309, K) + line(846.5, 4, 846.5, 303, K, thick);
g += line(929, 49.5, 870, 49.5, K, ends('arrowK')) + line(1019, 78.5, 870, 78.5, K, ends('arrowK'));
g += line(950.5, 0, 950.5, 43, K, ends('arrowK')) + line(1040.5, 0, 1040.5, 71, K, ends('arrowK'));
g += line(773, 171, 980, 302, '#111', 'stroke-dasharray="1 2"' + ends('arrowK')) + line(782, 250, 971, 303, '#111', 'stroke-dasharray="1 2"' + ends('arrowK'));
g += dot(704, 71) + dot(760, 71) + dot(706, 245);
g += node(684, 106, 16, 'url(#gKey)', 'Keyer2 (green keyer)', '(alpha)') + node(740, 106, 16, 'url(#gKey)', 'Keyer1 (luminance key)', '(alpha)');
[[684, 135, 'Roto5'], [740, 135, 'Roto3'], [684, 155, 'Roto6'], [740, 155, 'Roto4'], [929, 11, 'Roto1'], [1019, 13, 'Roto2']].forEach(([x, y, n]) => {
    g += node(x, y, 16, 'url(#gGreen)', n, '(alpha)') + side(x, y + 8, x > 900 ? K : O) + pin(x + 40, y - 2);
});
g += node(825, -6, 10, 'url(#gGreen)', 'RotoPaint3');
[[45, 2], [73, 3], [303, 4]].forEach(([y, n]) => {
    g += node(826, y, 10, 'url(#gBlue)', `Merge${n} (over)`) + side(826, y + 5, K) + text(846, y - 5, 'B', 'pipe');
});
g += node(929, 45, 10, 'url(#gGrey)', 'Premult2') + node(1019, 73, 10, 'url(#gGrey)', 'Premult3') + node(740, 301, 16, 'url(#gGrey)', 'Premult4', '(all)');
g += node(740, 240, 10, '#fdb55c', 'AddMix1') + '<rect x="740" y="240" width="42" height="11" fill="none" stroke="#2448b8" stroke-width="1.500"/>';
g += '<path d="M844 315h5l-2.500 4z"/>';
g += '<path d="M972 304h37l4 5-4 5h-37l-4-5z" fill="url(#gGrey)" stroke="#555"/>' + text(990, 312, 'Viewer1');
[[875, 52, 'A'], [875, 81, 'A'], [818, 312, 'A'], [951, 6, 'bg'], [1041, 8, 'bg'], [964, 305, '1'], [975, 303, '2']]
    .forEach(p => g += text(...p, 'pipe'));
[[704, 130, 'bg'], [760, 130, 'bg'], [732, 248, 'A'], [760, 236, 'B']].forEach(p => g += text(...p, 'pale'));
// overview map
g += '<path d="M994.500 326V278.500H1170" fill="none" stroke="#bbb"/>' + rect(994, 277, 3, 3, '#ddd', 'stroke="#555"');
g += rect(1064, 284, 12, 18, '#6fc676') + rect(1066, 290, 2, 2, '#e07a3a') + rect(1066, 296, 2, 3, '#e07a3a') + rect(1070, 295, 3, 6, '#ccc');
g += rect(1085, 279, 4, 24, '#6d6dcc') + rect(1085, 279, 4, 4, '#a33aa3') + rect(1093, 283, 3, 3, '#ddd') + rect(1099, 283, 3, 3, '#ddd') + rect(1086, 283, 2, 3, '#fff');
g += '<path d="M1086 289h-4v34" fill="none" stroke="#111a3c" stroke-width="2"/>';
g += rect(1030, 303, 78, 20, '#5b4a4a', 'stroke="#dca0a0" fill-opacity=".85"') + rect(1075, 306, 10, 18, '#a3994b') + rect(1076, 309, 2, 7, '#3de03d') + rect(1080, 309, 2, 7, '#3de03d');
g += rect(1077, 312, 2, 9, '#222') + rect(1093, 304, 3, 2, '#8b8') + rect(1099, 304, 3, 2, '#8b8') + rect(1099, 308, 3, 1, '#ccc');
$('graph').innerHTML = g;
```
